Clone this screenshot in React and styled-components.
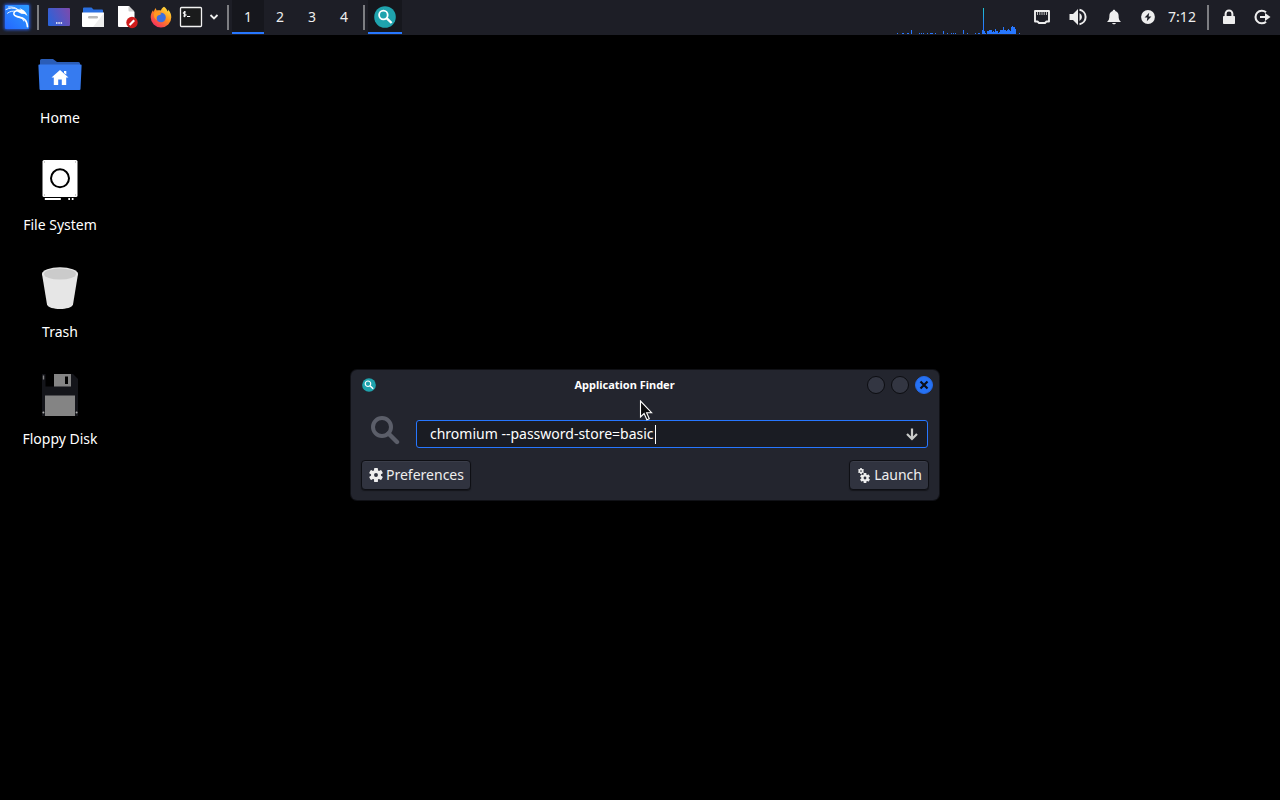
import React, { useState } from "react";
import styled, { createGlobalStyle } from "styled-components";

const launchers = [
  { name: "Show Desktop", icon: <DesktopIcon /> },
  { name: "File Manager", icon: <FilesIcon /> },
  { name: "Text Editor", icon: <EditorIcon /> },
  { name: "Firefox", icon: <FirefoxIcon /> },
];

const shortcuts = [
  { name: "Home", icon: <HomeIcon /> },
  { name: "File System", icon: <DriveIcon /> },
  { name: "Trash", icon: <TrashIcon /> },
  { name: "Floppy Disk", icon: <FloppyIcon /> },
];

// [x, height] pairs of the cpu graph
const cpuBars = [
  [1, 1], [6, 1], [7, 1], [11, 1], [12, 1], [15, 4], [23, 1], [25, 1],
  [27, 1], [31, 1], [34, 1], [35, 1], [36, 1], [39, 1], [47, 3], [51, 1],
  [55, 1], [57, 1], [59, 1], [67, 4], [71, 1], [79, 1], [82, 1], [83, 1],
  [86, 4], [87, 26], [88, 3], [89, 1], [91, 3], [92, 3], [93, 4], [94, 4],
  [95, 4], [96, 2], [97, 3], [98, 2], [99, 5], [100, 3], [101, 3], [102, 1],
  [103, 2], [104, 4], [105, 4], [106, 4], [107, 7], [108, 4], [109, 4],
  [110, 3], [111, 4], [112, 5], [113, 4], [114, 3], [115, 7], [116, 8],
  [117, 7], [118, 7], [119, 5], [123, 1],
];

const App = () => {
  const [workspace, setWorkspace] = useState(1);
  const [command, setCommand] = useState("chromium --password-store=basic");

  return (
    <Desktop>
      <GlobalStyle />
      <Panel>
        <PanelButton aria-label="Applications">
          <KaliIcon />
        </PanelButton>
        <Separator />
        {launchers.map((item) => (
          <PanelButton key={item.name} aria-label={item.name}>
            {item.icon}
          </PanelButton>
        ))}
        <PanelButton $width={26} aria-label="Terminal">
          <TerminalIcon />
        </PanelButton>
        <PanelButton $width={20} aria-label="More terminals">
          <svg width="10" height="8" viewBox="0 0 10 8">
            <path d="M1.5 2l3.5 3.5L8.5 2" fill="none" stroke="#eee" strokeWidth="1.8" />
          </svg>
        </PanelButton>
        <Separator />
        {[1, 2, 3, 4].map((n) => (
          <PanelButton
            key={n}
            $width={32}
            $active={workspace === n}
            onClick={() => setWorkspace(n)}
          >
            {n}
          </PanelButton>
        ))}
        <Separator />
        <PanelButton $active aria-label="Application Finder">
          <FinderIcon size={22} />
        </PanelButton>
        <Spacer />
        <CpuGraph viewBox="0 0 124 34">
          <defs>
            <linearGradient id="cpu" gradientUnits="userSpaceOnUse" x1="0" y1="34" x2="0" y2="8">
              <stop offset="0" stopColor="#2777ff" />
              <stop offset="0.3" stopColor="#2777ff" />
              <stop offset="1" stopColor="#1ec4d0" />
            </linearGradient>
          </defs>
          {cpuBars.map(([x, h]) => (
            <rect key={x} x={x} y={34 - h} width="1" height={h} fill="url(#cpu)" />
          ))}
        </CpuGraph>
        <PanelButton $width={36} aria-label="Network">
          <NetworkIcon />
        </PanelButton>
        <PanelButton $width={36} aria-label="Volume">
          <VolumeIcon />
        </PanelButton>
        <PanelButton $width={36} aria-label="Notifications">
          <BellIcon />
        </PanelButton>
        <PanelButton $width={32} aria-label="Power">
          <PowerIcon />
        </PanelButton>
        <Clock>7:12</Clock>
        <Separator />
        <PanelButton aria-label="Lock">
          <LockIcon />
        </PanelButton>
        <PanelButton aria-label="Log out">
          <LogoutIcon />
        </PanelButton>
      </Panel>

      <Shortcuts>
        {shortcuts.map((item) => (
          <Shortcut key={item.name}>
            {item.icon}
            <span>{item.name}</span>
          </Shortcut>
        ))}
      </Shortcuts>

      <Finder aria-label="Application Finder">
        <TitleBar>
          <FinderIcon size={14} />
          <h1>Application Finder</h1>
          <WindowButton aria-label="Minimize" />
          <WindowButton aria-label="Maximize" />
          <WindowButton $close aria-label="Close">
            <svg width="10" height="10" viewBox="0 0 10 10">
              <path d="M1.5 1.5l7 7M8.5 1.5l-7 7" stroke="#0c0f18" strokeWidth="2.2" />
            </svg>
          </WindowButton>
        </TitleBar>
        <Body>
          <SearchRow>
            <svg width="30" height="30" viewBox="0 0 30 30">
              <circle cx="12" cy="12" r="9" fill="none" stroke="#5b5e69" strokeWidth="4" />
              <path d="M18.5 18.5l8.5 8.5" stroke="#5b5e69" strokeWidth="4.4" strokeLinecap="round" />
            </svg>
            <Field>
              <input
                aria-label="Command"
                value={command}
                spellCheck={false}
                onChange={(e) => setCommand(e.target.value)}
              />
              <Caret />
              <button aria-label="Show all applications">
                <svg width="14" height="14" viewBox="0 0 14 14">
                  <path d="M7 1.5v10M2 7l5 5 5-5" fill="none" stroke="#c9cac9" strokeWidth="2.2" />
                </svg>
              </button>
            </Field>
          </SearchRow>
          <Actions>
            <ActionButton>
              <svg width="16" height="16" viewBox="0 0 16 16">
                <Gear cx={8} cy={8} r={7} />
              </svg>
              Preferences
            </ActionButton>
            <ActionButton>
              <svg width="16" height="16" viewBox="0 0 16 16">
                <Gear cx={5} cy={4} r={3} />
                <Gear cx={9} cy={11} r={5} />
              </svg>
              Launch
            </ActionButton>
          </Actions>
        </Body>
      </Finder>

      <Pointer width="14" height="22" viewBox="0 0 14 22">
        <path
          d="M1.5 1v16l3.6-3.5 2.8 6.3 2.400-1.100-2.700-6h5z"
          fill="#0b0b0d"
          stroke="#fff"
          strokeWidth="1.1"
        />
      </Pointer>
    </Desktop>
  );
};

export default App;

function KaliIcon() {
  return (
    <svg width="34" height="34" viewBox="0 0 34 34">
      <defs>
        <linearGradient id="kali" x1="0" y1="1" x2="1" y2="0">
          <stop offset="0" stopColor="#2467ff" />
          <stop offset="1" stopColor="#2c9cff" />
        </linearGradient>
        <filter id="glow" x="-20%" y="-20%" width="140%" height="140%">
          <feGaussianBlur stdDeviation="1.5" />
        </filter>
      </defs>
      <rect x="4" y="4" width="26" height="26" rx="2" fill="#2059d8" filter="url(#glow)" />
      <rect x="5" y="5" width="24" height="24" rx="1" fill="url(#kali)" />
      <g fill="none" stroke="#fff" strokeLinecap="round" strokeLinejoin="round">
        <path d="M6 9.500c3.500-1.700 7-2 11-.3M7.500 13.200c2.500-1.900 5-2.400 8-1.900" strokeWidth="0.9" />
        <path d="M8.500 7c3.500-.4 6.500.4 9 2.200" strokeWidth="0.9" />
        <path d="M16.500 10.700c-2.700.8-3.500 3-1.800 4.700 2.200 2 7 1.500 9.800 4 2 1.700 2.700 4.300 3 7.200" strokeWidth="1.600" />
        <path d="M17 16.800c4 .2 6 1.700 6.700 4.200" strokeWidth="0.9" />
      </g>
      <path d="M16.500 9.800c1.800-.8 3.200-.6 4.500.3l-1.500-2 4.500 2.400 2 2.200 1.500 3.300-2.800-2-3.400-.3c-1.500-.8-3-1.600-4.800-2.400z" fill="#fff" />
    </svg>
  );
}

function DesktopIcon() {
  return (
    <svg width="24" height="20" viewBox="0 0 24 20">
      <defs>
        <linearGradient id="desk" x1="0" y1="0.6" x2="1" y2="0.2">
          <stop offset="0" stopColor="#2d62d8" />
          <stop offset="1" stopColor="#7a4bae" />
        </linearGradient>
      </defs>
      <rect x="1" y="1" width="22" height="18" rx="1" fill="url(#desk)" />
      <path d="M9 16h1.500M11.300 16h1.500M13.600 16h1.500" stroke="#fff" strokeWidth="1.400" />
    </svg>
  );
}

function FilesIcon() {
  return (
    <svg width="22" height="20" viewBox="0 0 22 20">
      <path d="M1 6V1.500a1 1 0 011-1h7.500l2 2H20a1 1 0 011 1V6z" fill="#2a6fe0" />
      <path d="M0 5.500h22V19a1 1 0 01-1 1H1a1 1 0 01-1-1z" fill="#fff" />
      <path d="M22 6v14H11z" fill="#eee" />
      <rect x="6" y="9" width="10" height="2.500" rx="1.200" fill="#b9b9b9" />
    </svg>
  );
}

function EditorIcon() {
  return (
    <svg width="22" height="24" viewBox="0 0 22 24">
      <path d="M2 1h11l5.500 6v15H3a1 1 0 01-1-1z" fill="#fff" />
      <path d="M12.500 1v4.500a1 1 0 001 1h5z" fill="#cfcfcf" />
      <circle cx="16" cy="17.500" r="5.700" fill="#cf1b1b" />
      <path d="M13.600 20l4.600-4.800" stroke="#fff" strokeWidth="2.200" />
    </svg>
  );
}

function FirefoxIcon() {
  return (
    <svg width="22" height="22" viewBox="0 0 22 22">
      <defs>
        <linearGradient id="fox" x1="0.8" y1="0.1" x2="0.2" y2="0.9">
          <stop offset="0" stopColor="#ffd83a" />
          <stop offset="0.45" stopColor="#ff8a1e" />
          <stop offset="1" stopColor="#f5315e" />
        </linearGradient>
      </defs>
      <path
        d="M14 .8c2 1.400 3 3 3.500 4.500.8 0 .8-1 .6-1.800 2 2 3.200 4.800 3.200 7.700a10.300 10.300 0 01-20.600 0C.7 8.600 1.600 6 3 4.200l.5 1.700L5.500 2l1.200 2.500c1.500-.5 3-.4 4.200 0C11.500 3 12.500 1.600 14 .8z"
        fill="url(#fox)"
      />
      <circle cx="11" cy="11.500" r="4.800" fill="#3b6fe0" />
      <path d="M4.500 6.500c2-.8 4.300-.6 6.800 1.300-.8 1.400-2.600 1.200-3.600 2C6.500 11 6.300 12.500 7 14c-3-1.300-4-4.500-2.500-7.500z" fill="#ff9a22" />
    </svg>
  );
}

function TerminalIcon() {
  return (
    <svg width="24" height="22" viewBox="0 0 24 22">
      <rect x="1.500" y="1.500" width="21" height="19" rx="1" fill="#1a1b1c" stroke="#f2f2f2" strokeWidth="1.300" />
      <g fill="none" stroke="#fff" strokeWidth="1">
        <path d="M7 6H5.200a.9.9 0 000 2h.9a.9.9 0 010 2H4.200M5.600 5v6.200M8 10.500h3.200" />
      </g>
    </svg>
  );
}

function FinderIcon({ size }) {
  return (
    <svg width={size} height={size} viewBox="0 0 22 22">
      <circle cx="11" cy="11" r="10.800" fill="#1fa3ad" />
      <circle cx="9.400" cy="9" r="4.300" fill="none" stroke="#fff" strokeWidth="1.800" />
      <path d="M12.600 12.200l5 4.800" stroke="#fff" strokeWidth="2.400" />
    </svg>
  );
}

function NetworkIcon() {
  return (
    <svg width="18" height="16" viewBox="0 0 18 16">
      <path d="M2 2h14v10.500h-2.500L12 14H6l-1.500-1.500H2z" fill="none" stroke="#eee" strokeWidth="1.900" strokeLinejoin="round" />
      <path d="M4.500 3v3M6.800 3v3M9 3v3M11.200 3v3M13.500 3v3" stroke="#bbb" strokeWidth="1" />
    </svg>
  );
}

function VolumeIcon() {
  return (
    <svg width="18" height="18" viewBox="0 0 18 18">
      <path d="M0.500 6h3.500l5-5v16l-5-5H0.500z" fill="#eee" />
      <path d="M10.500 5a4.500 4.500 0 010 8z" fill="#eee" />
      <path d="M10.500 1.800a7.300 7.300 0 010 14.400" fill="none" stroke="#eee" strokeWidth="2" />
    </svg>
  );
}

function BellIcon() {
  return (
    <svg width="16" height="16" viewBox="0 0 16 16">
      <path d="M8 .8c.8 0 1.200.5 1.300 1.100 2.100.6 3.300 2.400 3.300 4.600 0 3.300.6 4.900 2.400 6.500H1c1.800-1.600 2.400-3.200 2.400-6.500 0-2.200 1.200-4 3.300-4.600.1-.6.500-1.100 1.300-1.100zM6 14h4c-.4.900-1.100 1.300-2 1.300S6.400 14.900 6 14z" fill="#eee" />
    </svg>
  );
}

function PowerIcon() {
  return (
    <svg width="14" height="14" viewBox="0 0 14 14">
      <circle cx="7" cy="7" r="6.900" fill="#eee" />
      <path d="M8.200 2.800L3.600 7.600h2.800l-.6 3.600 4.600-4.800H7.600z" fill="#1c1e26" />
    </svg>
  );
}

function LockIcon() {
  return (
    <svg width="14" height="16" viewBox="0 0 14 16">
      <rect x="1" y="7" width="12" height="8" rx="0.800" fill="#eee" />
      <path d="M3.600 8V4.800a3.400 3.400 0 016.800 0V8" fill="none" stroke="#eee" strokeWidth="2" />
    </svg>
  );
}

function LogoutIcon() {
  return (
    <svg width="18" height="16" viewBox="0 0 18 16">
      <path d="M12 3.300A6.300 6.300 0 1012 12.700" fill="none" stroke="#eee" strokeWidth="2.100" />
      <path d="M6 7h5V4l5.500 4-5.500 4V9H6z" fill="#eee" />
    </svg>
  );
}

function HomeIcon() {
  return (
    <svg width="48" height="48" viewBox="0 0 48 48">
      <path d="M4 14V9.500a1.500 1.500 0 011.500-1.500H17l4 3h21.500a1.500 1.500 0 011.500 1.500V16H4z" fill="#2a5db8" />
      <path d="M3.200 13.500h41.600a.8.800 0 01.8.9L44.500 38a1 1 0 01-1 1H4.500a1 1 0 01-1-1L2.400 14.400a.8.800 0 01.8-.9z" fill="#367bf0" />
      <path d="M24 19l8.500 7.500h-2.300V34h-4.400v-5.500h-3.600V34h-4.400v-7.500h-2.300zM28 20h2.300v3.500L28 22z" fill="#fff" />
    </svg>
  );
}

function DriveIcon() {
  return (
    <svg width="48" height="48" viewBox="0 0 48 48">
      <rect x="6.500" y="2" width="35" height="37" rx="1.500" fill="#fff" />
      <circle cx="24" cy="20.300" r="9" fill="none" stroke="#000" strokeWidth="2" />
      <path d="M8.800 41h16M32.300 41h1.700M35.800 41h1.700" stroke="#fff" strokeWidth="1.800" />
      <path d="M8 4h1M39 4h1M8 37h1M39 37h1" stroke="#999" strokeWidth="1" />
    </svg>
  );
}

function TrashIcon() {
  return (
    <svg width="48" height="48" viewBox="0 0 48 48">
      <path d="M6 9l5 30.500C11.800 42.500 18 44 24 44s12.200-1.500 13-4.500L42 9z" fill="#e6e6e6" />
      <ellipse cx="24" cy="8.800" rx="18" ry="6.600" fill="#e6e6e6" />
      <ellipse cx="24" cy="9" rx="16" ry="5.600" fill="#cbcbcb" />
    </svg>
  );
}

function FloppyIcon() {
  return (
    <svg width="48" height="48" viewBox="0 0 48 48">
      <path d="M6 2h31l5 5v37H6z" fill="#14151a" />
      <path d="M9.500 2H18v12.500H9.500z" fill="#000" />
      <path d="M18 2h17v12.500H18zM9 23.500h30V44H9z" fill="#848484" />
      <path d="M29 4.500h3V12h-3z" fill="#000" />
      <path d="M6.800 3.500h1.400v4H6.800z" fill="#848484" />
      <circle cx="7.400" cy="40.500" r="1" fill="#aaa" />
      <circle cx="40.600" cy="40.500" r="1" fill="#aaa" />
    </svg>
  );
}

function Gear({ cx, cy, r }) {
  return (
    <g>
      {[0, 60, 120].map((angle) => (
        <rect
          key={angle}
          x={cx - r * 0.28}
          y={cy - r}
          width={r * 0.56}
          height={r * 2}
          rx={r * 0.12}
          transform={`rotate(${angle} ${cx} ${cy})`}
          fill="#eee"
        />
      ))}
      <circle cx={cx} cy={cy} r={r * 0.72} fill="#eee" />
      <circle cx={cx} cy={cy} r={r * 0.28} fill="#30333f" />
    </g>
  );
}

const GlobalStyle = createGlobalStyle`
  * {
    box-sizing: border-box;
  }
  body {
    margin: 0;
    background: #000;
    color: #eee;
    font: 14px/20px "Noto Sans", sans-serif;
  }
  button, input {
    font: inherit;
    color: inherit;
    border: none;
    padding: 0;
    background: none;
  }
  svg {
    display: block;
    flex-shrink: 0;
  }
`;

const Desktop = styled.main`
  position: relative;
  min-height: 100vh;
  overflow: hidden;
`;

const Panel = styled.header`
  display: flex;
  height: 35px;
  background: #1d1e26;
`;

const PanelButton = styled.button`
  display: flex;
  align-items: center;
  justify-content: center;
  width: ${({ $width }) => $width || 34}px;
  height: 34px;
  background: ${({ $active }) => ($active ? "#16171d" : "transparent")};
  box-shadow: ${({ $active }) => ($active ? "inset 0 -2px #2777ff" : "none")};
`;

const Separator = styled.div`
  width: 2px;
  height: 25px;
  margin: 5px 3px;
  background: #7d7e82;
`;

const Spacer = styled.div`
  flex: 1;
`;

const CpuGraph = styled.svg`
  width: 124px;
  height: 34px;
  margin-right: 4px;
  shape-rendering: crispEdges;
`;

const Clock = styled.time`
  width: 40px;
  padding-right: 4px;
  line-height: 34px;
  text-align: center;
`;

const Shortcuts = styled.nav`
  display: flex;
  flex-direction: column;
  align-items: flex-start;
  gap: 29px;
  padding-top: 16px;
`;

const Shortcut = styled.button`
  display: flex;
  flex-direction: column;
  align-items: center;
  gap: 8px;
  width: 120px;
  color: #fff;
  line-height: 22px;
`;

const Finder = styled.section`
  position: absolute;
  top: 370px;
  left: 351px;
  width: 588px;
  background: #23252e;
  border-radius: 6px;
  box-shadow: 0 0 0 1px #101116;
`;

const TitleBar = styled.div`
  display: flex;
  align-items: center;
  gap: 6px;
  height: 30px;
  padding: 0 6px 0 11px;
  h1 {
    flex: 1;
    margin: 0;
    padding-left: 6px;
    color: #fff;
    font-size: 11px;
    font-weight: bold;
    text-align: center;
  }
`;

const WindowButton = styled.button`
  display: flex;
  align-items: center;
  justify-content: center;
  width: 18px;
  height: 18px;
  border: 1px solid ${({ $close }) => ($close ? "#2569e6" : "#0c0d11")};
  border-radius: 50%;
  background: ${({ $close }) => ($close ? "#2672f5" : "#333642")};
`;

const Body = styled.div`
  padding: 15px 10px 10px;
`;

const SearchRow = styled.div`
  display: flex;
  gap: 16px;
  padding: 0 1px 0 9px;
`;

const Field = styled.div`
  position: relative;
  display: flex;
  flex: 1;
  align-items: center;
  height: 28px;
  margin-top: 5px;
  padding: 0 8px 0 13px;
  border: 1px solid #2777ff;
  border-radius: 3px;
  background: #1a1c23;
  input {
    flex: 1;
    min-width: 0;
    outline: none;
    color: #fff;
    caret-color: transparent;
  }
`;

const Caret = styled.i`
  position: absolute;
  top: 4px;
  left: 238px;
  width: 1px;
  height: 19px;
  background: #fff;
`;

const Actions = styled.div`
  display: flex;
  justify-content: space-between;
  margin-top: 12px;
`;

const ActionButton = styled.button`
  display: flex;
  align-items: center;
  gap: 2px;
  height: 30px;
  padding: 0 6px;
  border: 1px solid #0e0f14;
  border-radius: 4px;
  background: #30333f;
  box-shadow: inset 0 1px #3a3d49, 0 1px 1px #15161b;
`;

const Pointer = styled.svg`
  position: absolute;
  top: 400px;
  left: 639px;
`;
